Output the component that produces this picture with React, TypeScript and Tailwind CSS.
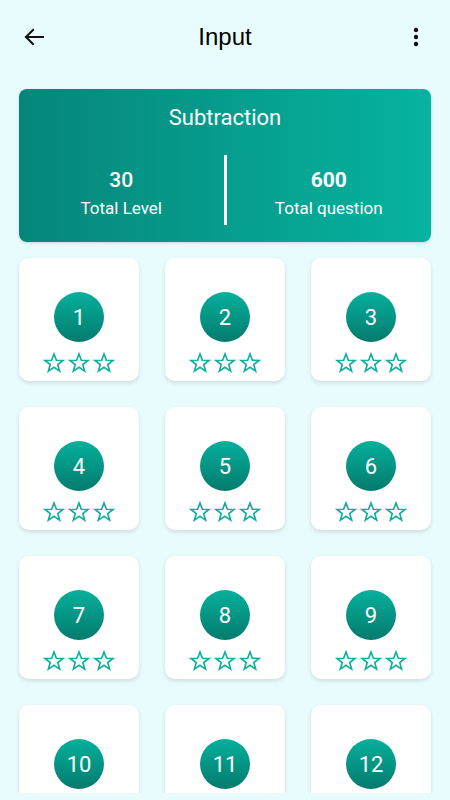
import React from 'react';

const levels = Array.from({ length: 12 }, (_, i) => i + 1);

function StarOutline() {
  return (
    <svg width="22" height="22" viewBox="0 0 24 24" fill="none">
      <polygon
        points="12,2.2 14.6,9 21.8,9.2 16.1,13.7 18.1,20.8 12,16.7 5.9,20.8 7.9,13.7 2.2,9.2 9.4,9"
        stroke="#0fae9d"
        strokeWidth="1.8"
        strokeLinejoin="miter"
      />
    </svg>
  );
}

function LevelCard({ level }: { level: number }) {
  return (
    <div className="h-[123px] rounded-[10px] bg-white shadow-[0_2px_4px_rgba(0,0,0,0.12)] flex flex-col items-center pt-[34px]">
      <div className="w-[50px] h-[50px] rounded-full bg-gradient-to-b from-[#06b09c] to-[#037b6e] flex items-center justify-center text-white text-[22px] font-['Roboto',sans-serif]">
        {level}
      </div>
      <div className="mt-[10px] flex gap-[3px]">
        <StarOutline />
        <StarOutline />
        <StarOutline />
      </div>
    </div>
  );
}

export default function App() {
  return (
    <div className="h-[800px] bg-[#e8fbfd] font-['Roboto',sans-serif]">
      <div className="h-[793px] overflow-hidden flex flex-col">
        <div className="h-[74px] shrink-0 flex items-center justify-between px-[22px]">
          <svg width="24" height="24" viewBox="0 0 24 24" fill="none" stroke="#111" strokeWidth="2" strokeLinecap="square">
            <path d="M21 12H4" />
            <path d="M11 5l-7 7 7 7" />
          </svg>
          <div className="text-[24px] text-black font-['Liberation_Sans',sans-serif]">Input</div>
          <svg width="24" height="24" viewBox="0 0 24 24" fill="#111">
            <circle cx="12" cy="5" r="2.2" />
            <circle cx="12" cy="12" r="2.2" />
            <circle cx="12" cy="19" r="2.2" />
          </svg>
        </div>

        <div className="px-[19px] mt-[15px] shrink-0">
          <div className="h-[153px] rounded-[8px] bg-gradient-to-r from-[#06867a] to-[#06b3a0] shadow-[0_1px_3px_rgba(0,0,0,0.15)] text-white flex flex-col items-center">
            <div className="mt-[15px] text-[22px] leading-[28px]">Subtraction</div>
            <div className="mt-[23px] w-full flex items-center">
              <div className="flex-1 flex flex-col items-center pt-[6px]">
                <div className="text-[21px] font-medium leading-[24px]">30</div>
                <div className="text-[17px] leading-[20px] mt-[6px]">Total Level</div>
              </div>
              <div className="w-[3px] h-[70px] bg-white" />
              <div className="flex-1 flex flex-col items-center pt-[6px]">
                <div className="text-[21px] font-bold leading-[24px]">600</div>
                <div className="text-[17px] leading-[20px] mt-[6px]">Total question</div>
              </div>
            </div>
          </div>
        </div>

        <div className="px-[19px] mt-[16px] grid grid-cols-3 gap-[26px]">
          {levels.map((l) => (
            <LevelCard key={l} level={l} />
          ))}
        </div>
      </div>
    </div>
  );
}
